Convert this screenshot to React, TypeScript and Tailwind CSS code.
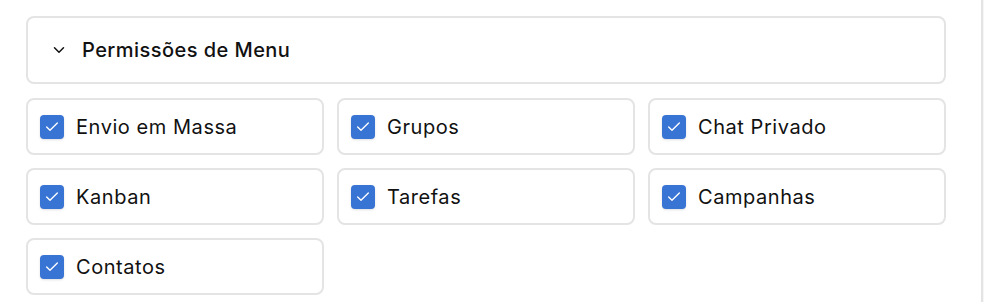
import { ChevronDown, Check } from 'lucide-react'

const items = [
  'Envio em Massa',
  'Grupos',
  'Chat Privado',
  'Kanban',
  'Tarefas',
  'Campanhas',
  'Contatos',
]

export default function App() {
  return (
    <div className="flex h-[302px] w-[984px] bg-white font-['Inter',sans-serif] text-[#111]">
      <div className="flex-1 pl-[26px] pr-[35px] pt-4">
        <div className="flex h-[68px] items-center gap-[14px] rounded-lg border-2 border-[#e4e4e4] px-[22px]">
          <ChevronDown className="h-[18px] w-[18px]" strokeWidth={2} />
          <span className="text-[20px] font-medium tracking-[0.45px]">Permissões de Menu</span>
        </div>
        <div className="mt-[14px] grid grid-cols-3 gap-[13px]">
          {items.map((item) => (
            <label
              key={item}
              className="flex h-[57px] items-center gap-3 rounded-lg border-2 border-[#e4e4e4] px-3"
            >
              <span className="flex h-6 w-6 items-center justify-center rounded-[4px] bg-[#3874d4] shadow-sm">
                <Check className="h-4 w-4 text-white" strokeWidth={2} />
              </span>
              <span className="text-[20px] tracking-[0.55px]">{item}</span>
            </label>
          ))}
        </div>
      </div>
      <div className="w-[3px] border-l-2 border-[#e4e4e4] bg-[#f6f6f6]" />
    </div>
  )
}
